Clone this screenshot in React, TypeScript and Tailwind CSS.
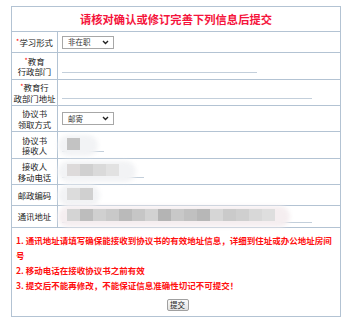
import React from "react";

const FONT = { fontFamily: '"Noto Sans CJK SC", "Noto Sans", sans-serif' };

function Req() {
  return <span className="text-[#ff0000] text-[7px] align-top leading-[8px]">*</span>;
}

function Chevron() {
  return (
    <svg width="7" height="5" viewBox="0 0 7 5" className="shrink-0">
      <path d="M1 1 L3.5 3.5 L6 1" stroke="#222" strokeWidth="1.4" fill="none" />
    </svg>
  );
}

function Select({ value }: { value: string }) {
  return (
    <div className="flex h-[13px] w-[52px] items-center justify-between border border-[#a7a7a7] bg-white pl-[5px] pr-[4px] text-[7.5px] text-[#333]">
      <span>{value}</span>
      <Chevron />
    </div>
  );
}

function Underline({ w }: { w: number }) {
  return <div className="h-[13px] border-b border-[#c3cfdb]" style={{ width: w }} />;
}

function Blob({ blocks, width, tint }: { blocks: string[]; width: number; tint?: boolean }) {
  return (
    <div className="pointer-events-none absolute left-[-4px] top-[-4px] h-[21px]" style={{ width }}>
      <div
        className={
          "absolute inset-0 rounded-full blur-[2px] " + (tint ? "bg-[#f5eef0]" : "bg-[#f2f3f5]")
        }
      />
      <div className="absolute left-[9px] top-[3px] flex h-[12px] blur-[0.6px]">
        {blocks.map((c, i) => (
          <div key={i} className="h-full w-[13px]" style={{ backgroundColor: c }} />
        ))}
      </div>
    </div>
  );
}

function Row({
  h,
  label,
  children,
}: {
  h: string;
  label: React.ReactNode;
  children: React.ReactNode;
}) {
  return (
    <div className={"flex border-b border-[#b3c3d3] " + h}>
      <div className="flex w-[46px] shrink-0 items-center justify-center border-r border-[#b3c3d3] text-center text-[8.4px] leading-[10.5px] text-[#222]">
        <div>{label}</div>
      </div>
      <div className="flex flex-1 items-center pl-[4px]">{children}</div>
    </div>
  );
}

export default function App() {
  return (
    <div className="min-h-[323px] w-[351px] bg-white pt-[6px]" style={FONT}>
      <div className="ml-[11px] w-[330px] border border-[#b3c3d3] bg-white">
        <div className="flex h-[25px] items-center justify-center border-b border-[#b3c3d3] text-[11.3px] font-bold text-[#f5143c]">
          请核对确认或修订完善下列信息后提交
        </div>
        <Row
          h="h-[21px]"
          label={
            <>
              <Req />
              学习形式
            </>
          }
        >
          <Select value="非在职" />
        </Row>
        <Row
          h="h-[27px]"
          label={
            <>
              <Req />
              教育
              <br />
              行政部门
            </>
          }
        >
          <Underline w={195} />
        </Row>
        <Row
          h="h-[26px]"
          label={
            <>
              <Req />
              教育行
              <br />
              政部门地址
            </>
          }
        >
          <Underline w={250} />
        </Row>
        <Row
          h="h-[26px]"
          label={
            <>
              协议书
              <br />
              领取方式
            </>
          }
        >
          <Select value="邮寄" />
        </Row>
        <Row
          h="h-[27px]"
          label={
            <>
              协议书
              <br />
              接收人
            </>
          }
        >
          <div className="relative">
            <Underline w={42} />
            <Blob blocks={["#c3c3c3"]} width={40} />
          </div>
        </Row>
        <Row
          h="h-[26px]"
          label={
            <>
              接收人
              <br />
              移动电话
            </>
          }
        >
          <div className="relative">
            <Underline w={82} />
            <Blob blocks={["#dddada", "#d0d0d0", "#dadada", "#e2e2e2"]} width={78} />
          </div>
        </Row>
        <Row h="h-[21px]" label={<>邮政编码</>}>
          <div className="relative">
            <div className="h-[13px] w-[40px]" />
            <Blob blocks={["#dcdcdc", "#d0d0d0"]} width={42} />
          </div>
        </Row>
        <Row h="h-[22px]" label={<>通讯地址</>}>
          <div className="relative">
            <Underline w={250} />
            <Blob
              tint
              blocks={[
                "#d4d4d4",
                "#bdbdbd",
                "#d0d0d0",
                "#c9c9c9",
                "#bababa",
                "#c6c6c6",
                "#d2d2d2",
                "#b4b4b4",
                "#c8c8c8",
                "#c0c0c0",
                "#b7b7b7",
                "#d6d6d6",
                "#cacaca",
                "#cfcfcf",
                "#d8d8d8",
                "#dedede",
              ]}
              width={232}
            />
          </div>
        </Row>
        <div className="h-[88px] pl-[4px] pr-[1px] pt-[5px] text-[8.5px] font-bold leading-[15px] text-[#ff1010]">
          <div>1. 通讯地址请填写确保能接收到协议书的有效地址信息，详细到住址或办公地址房间号</div>
          <div>2. 移动电话在接收协议书之前有效</div>
          <div>3. 提交后不能再修改，不能保证信息准确性切记不可提交！</div>
          <div className="mt-[6px] flex justify-center">
            <button className="h-[12px] w-[22px] rounded-[2px] border border-[#a0a0a0] bg-gradient-to-b from-[#fafafa] to-[#e2e2e2] text-[7.5px] font-normal leading-[10px] text-[#222]">
              提交
            </button>
          </div>
        </div>
      </div>
    </div>
  );
}
